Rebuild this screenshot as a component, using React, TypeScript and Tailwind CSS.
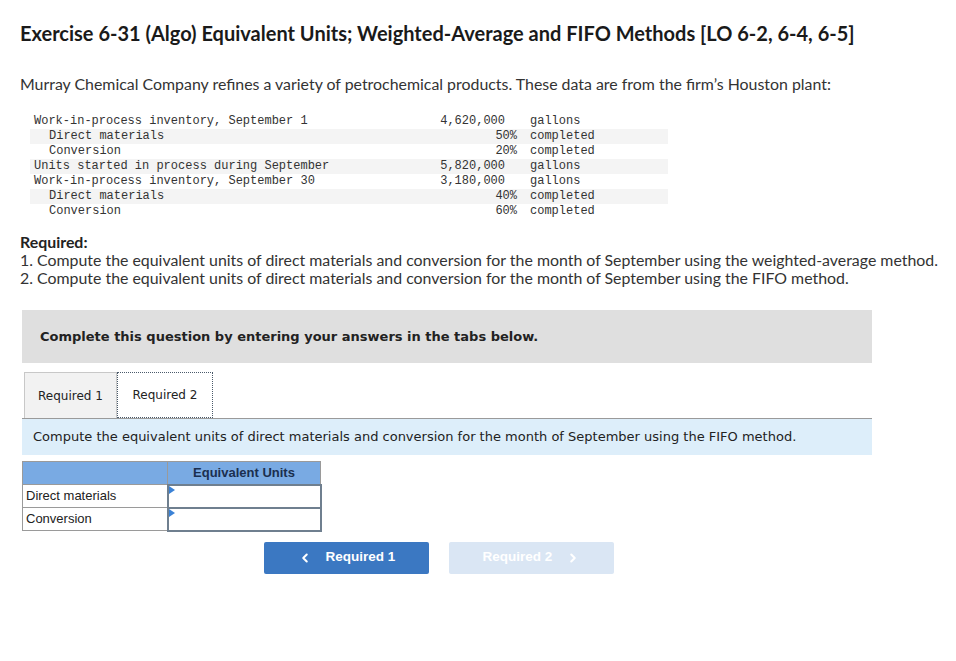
import React from 'react';
import { ChevronLeft, ChevronRight } from 'lucide-react';

const DATA = [
  { label: 'Work-in-process inventory, September 1', num: '4,620,000', unit: 'gallons', indent: false },
  { label: 'Direct materials', num: '50%', unit: 'completed', indent: true },
  { label: 'Conversion', num: '20%', unit: 'completed', indent: true },
  { label: 'Units started in process during September', num: '5,820,000', unit: 'gallons', indent: false },
  { label: 'Work-in-process inventory, September 30', num: '3,180,000', unit: 'gallons', indent: false },
  { label: 'Direct materials', num: '40%', unit: 'completed', indent: true },
  { label: 'Conversion', num: '60%', unit: 'completed', indent: true },
];

const sans = "font-['Lato','Liberation_Sans',sans-serif]";
const verd = "font-['DejaVu_Sans','Liberation_Sans',sans-serif]";
const arial = "font-['Liberation_Sans','Arial',sans-serif]";

function InputCell() {
  return (
    <td className="relative border-2 border-[#6f7f8f] bg-white p-0 h-[23px]">
      <span className="absolute left-0 top-0 w-0 h-0 border-t-[4px] border-b-[4px] border-l-[6px] border-t-transparent border-b-transparent border-l-[#3b82d6]" />
    </td>
  );
}

export default function App() {
  return (
    <div className="min-h-[661px] bg-white text-[#222] pl-[20px] pt-[20px]">
      <h1 className={`${sans} font-bold text-[20px] leading-[26px] text-[#1a1a1a] whitespace-nowrap`}>
        Exercise 6-31 (Algo) Equivalent Units; Weighted-Average and FIFO Methods [LO 6-2, 6-4, 6-5]
      </h1>

      <p className={`${sans} text-[15.9px] leading-[20px] mt-[28px] text-[#333] whitespace-nowrap`}>
        Murray Chemical Company refines a variety of petrochemical products. These data are from the firm’s Houston plant:
      </p>

      <table className="mt-[20px] ml-[10px] w-[638px] border-collapse font-['Liberation_Mono','DejaVu_Sans_Mono',monospace] text-[12px] leading-[15px] text-[#333]">
        <tbody>
          {DATA.map((r, i) => (
            <tr key={i} className={i % 2 === 1 ? 'bg-[#f4f4f4]' : 'bg-white'}>
              <td className={r.indent ? 'pl-[19px] py-0 whitespace-pre' : 'pl-[4px] py-0 whitespace-pre'}>{r.label}</td>
              <td className={`text-right py-0 w-[100px] ${r.unit === 'gallons' ? 'pr-[12px]' : 'pr-0'}`}>{r.num}</td>
              <td className="pl-[13px] py-0 w-[151px]">{r.unit}</td>
            </tr>
          ))}
        </tbody>
      </table>

      <div className={`${sans} text-[15.9px] leading-[18px] mt-[14px] text-[#333] whitespace-nowrap`}>
        <div className="font-bold text-[#222]">Required:</div>
        <div>1. Compute the equivalent units of direct materials and conversion for the month of September using the weighted-average method.</div>
        <div>2. Compute the equivalent units of direct materials and conversion for the month of September using the FIFO method.</div>
      </div>

      <div className="ml-[2px] w-[850px] mt-[23px]">
        <div className={`${verd} bg-[#dfdfdf] h-[53px] flex items-center pl-[18px] text-[13px] font-bold text-[#222]`}>
          Complete this question by entering your answers in the tabs below.
        </div>

        <div className="mt-[9px] flex items-end border-b border-[#9a9a9a]">
          <div className={`${verd} ml-[2px] h-[46px] w-[93px] bg-[#f2f2f2] border border-b-0 border-[#c8c8c8] flex items-center justify-center text-[12px] text-[#222]`}>
            Required 1
          </div>
          <div className={`${verd} h-[46px] w-[96px] bg-white border border-dotted border-[#4a5a6a] flex items-center justify-center text-[12px] text-[#222]`}>
            Required 2
          </div>
        </div>

        <div className={`${verd} bg-[#ddeefa] h-[36px] flex items-center pl-[11px] text-[13px] text-[#222]`}>
          Compute the equivalent units of direct materials and conversion for the month of September using the FIFO method.
        </div>

        <table className={`${arial} mt-[6px] border-collapse text-[13px] text-[#222]`}>
          <thead>
            <tr className="bg-[#79aae3]">
              <th className="w-[145px] h-[23px] border border-[#9a9a9a]" />
              <th className="w-[153px] h-[23px] border border-[#9a9a9a] text-[13px] font-bold text-[#1b2f4f]">Equivalent Units</th>
            </tr>
          </thead>
          <tbody>
            <tr>
              <td className="border border-[#9a9a9a] pl-[3px] h-[23px]">Direct materials</td>
              <InputCell />
            </tr>
            <tr>
              <td className="border border-[#9a9a9a] pl-[3px] h-[23px]">Conversion</td>
              <InputCell />
            </tr>
          </tbody>
        </table>

        <div className={`${arial} mt-[10px] flex gap-[20px] pl-[242px]`}>
          <button className="w-[165px] h-[32px] rounded-[2px] bg-[#3b78c2] text-white font-bold text-[13.5px] flex items-center justify-center gap-[14px]">
            <ChevronLeft size={14} strokeWidth={3.5} />
            <span>Required 1</span>
          </button>
          <button className="w-[165px] h-[32px] rounded-[2px] bg-[#dae6f4] text-white font-bold text-[13.5px] flex items-center justify-center gap-[14px]">
            <span>Required 2</span>
            <ChevronRight size={14} strokeWidth={3.5} />
          </button>
        </div>
      </div>
    </div>
  );
}
